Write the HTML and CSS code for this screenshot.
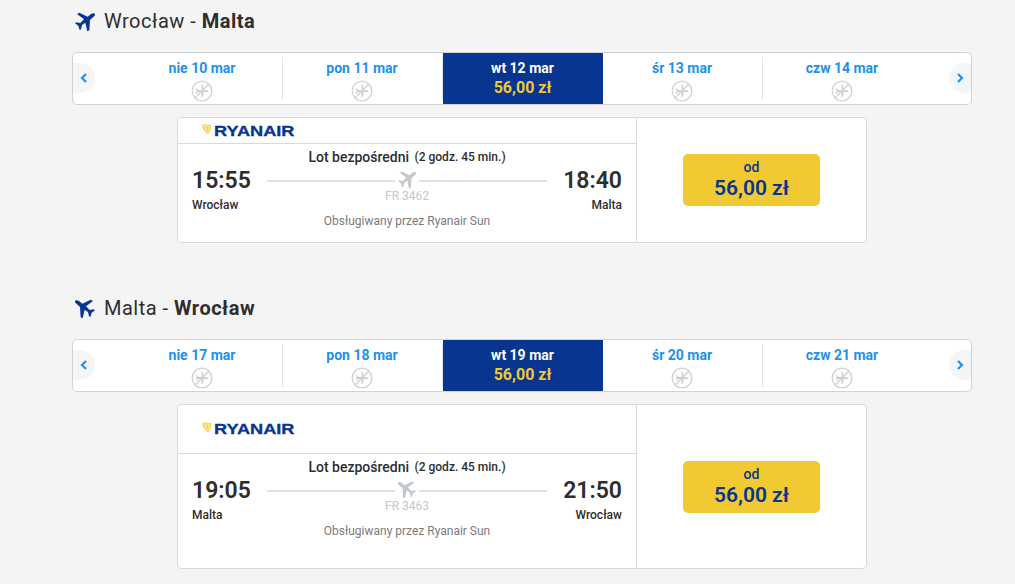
FILE: index.html
```html
<!DOCTYPE html>
<html lang="pl">
<head>
  <meta charset="UTF-8" />
  <meta name="viewport" content="width=device-width, initial-scale=1.0" />
  <title>Wrocław - Malta</title>
  <link rel="stylesheet" href="styles.css">
</head>
<body>
  <svg class="sprite">
    <symbol id="plane" viewBox="0 0 60 60">
      <path d="M60 6C59 2 52 3 47 7L38 14L13 2L6 6L27 22L16 33L4 31L0 34L10 41L14 54L18 52L21 39L31 32L37 58L43 55L45 24L54 16C59 12 61 9 60 6Z"/>
    </symbol>
    <symbol id="no-flight" viewBox="0 0 22 22">
      <circle cx="11" cy="11" r="9.8" fill="none" stroke="currentColor" stroke-width="1.3"/>
      <path d="M17.500 11C17.500 10.200 16.500 9.900 15 9.900H13L12 5H10.500L10.500 9.900H7.200L6 8.200H5L5.600 11L5 13.800H6L7.200 12.100H10.500L10 17H11.500L13 12.100H15C16.500 12.100 17.500 11.800 17.500 11Z"/>
      <path d="M4.300 17.700L17.700 4.300" stroke="currentColor" stroke-width="1.300"/>
    </symbol>
    <symbol id="ryanair" viewBox="0 0 94 14">
      <path d="M1.500 2.500Q4 .8 6 2.200Q8 3 9.800 2.200Q10.200 7 7 11L5 9Q2 7 1.500 2.500Z" fill="#fbe9a6" stroke="#f1c933" stroke-width=".8"/>
      <path d="M2.500 4L8 5M3.500 6.500L7.500 7.500M7 2.500L6 9" stroke="#f1c933" stroke-width=".6"/>
      <text x="13" y="12.500" textLength="80.500" lengthAdjust="spacingAndGlyphs" class="logo-text">RYANAIR</text>
    </symbol>
  </svg>

  <div class="trip">
    <h2><svg class="icon"><use href="#plane"/></svg><span>Wrocław - <b>Malta</b></span></h2>
    <div class="days">
      <button class="arrow"><svg viewBox="0 0 10 12"><path d="M7 2L3 6L7 10"/></svg></button>
      <div class="day">nie 10 mar<svg><use href="#no-flight"/></svg></div>
      <div class="day">pon 11 mar<svg><use href="#no-flight"/></svg></div>
      <div class="day active">wt 12 mar<span class="fare">56,00 zł</span></div>
      <div class="day">śr 13 mar<svg><use href="#no-flight"/></svg></div>
      <div class="day">czw 14 mar<svg><use href="#no-flight"/></svg></div>
      <button class="arrow next"><svg viewBox="0 0 10 12"><path d="M3 2L7 6L3 10"/></svg></button>
    </div>
    <div class="flight">
      <div class="info">
        <div class="carrier"><svg><use href="#ryanair"/></svg></div>
        <div class="route">
          <div class="stop"><div class="time">15:55</div><div class="city">Wrocław</div></div>
          <div class="path">
            <div class="direct">Lot bezpośredni <small>(2 godz. 45 min.)</small></div>
            <div class="line"><svg><use href="#plane"/></svg></div>
            <div class="number">FR 3462</div>
            <div class="operator">Obsługiwany przez Ryanair Sun</div>
          </div>
          <div class="stop end"><div class="time">18:40</div><div class="city">Malta</div></div>
        </div>
      </div>
      <div class="price">
        <button class="btn">od<strong>56,00 zł</strong></button>
      </div>
    </div>
  </div>

  <div class="trip return">
    <h2><svg class="icon"><use href="#plane"/></svg><span>Malta - <b>Wrocław</b></span></h2>
    <div class="days">
      <button class="arrow"><svg viewBox="0 0 10 12"><path d="M7 2L3 6L7 10"/></svg></button>
      <div class="day">nie 17 mar<svg><use href="#no-flight"/></svg></div>
      <div class="day">pon 18 mar<svg><use href="#no-flight"/></svg></div>
      <div class="day active">wt 19 mar<span class="fare">56,00 zł</span></div>
      <div class="day">śr 20 mar<svg><use href="#no-flight"/></svg></div>
      <div class="day">czw 21 mar<svg><use href="#no-flight"/></svg></div>
      <button class="arrow next"><svg viewBox="0 0 10 12"><path d="M3 2L7 6L3 10"/></svg></button>
    </div>
    <div class="flight">
      <div class="info">
        <div class="carrier"><svg><use href="#ryanair"/></svg></div>
        <div class="route">
          <div class="stop"><div class="time">19:05</div><div class="city">Malta</div></div>
          <div class="path">
            <div class="direct">Lot bezpośredni <small>(2 godz. 45 min.)</small></div>
            <div class="line"><svg><use href="#plane"/></svg></div>
            <div class="number">FR 3463</div>
            <div class="operator">Obsługiwany przez Ryanair Sun</div>
          </div>
          <div class="stop end"><div class="time">21:50</div><div class="city">Wrocław</div></div>
        </div>
      </div>
      <div class="price">
        <button class="btn">od<strong>56,00 zł</strong></button>
      </div>
    </div>
  </div>
</body>
</html>
```
FILE: styles.css
```css
* { box-sizing: border-box; margin: 0; padding: 0; }
html, body { height: 100%; overflow: hidden; }
body { font-family: Roboto, sans-serif; background: #f4f4f4; color: #2e2e2e; }
button { border: none; font-family: inherit; cursor: pointer; }
.sprite { display: none; }
.logo-text {
  font: bold 14px "Liberation Sans", Arial, sans-serif;
  fill: #073590; stroke: #073590; stroke-width: 0.3px;
}

.trip { width: 900px; height: 287px; margin-left: 72px; }
.trip h2 {
  display: flex; align-items: center; height: 52px; padding: 0 0 10px 3px;
  font-size: 20px; font-weight: 400; letter-spacing: 0.5px;
}
.trip h2 b { font-weight: 700; }
.trip h2 .icon { width: 20px; height: 20px; margin: 2px 9px 0 0; fill: #073590; }
.return .icon, .return .line svg { transform: scaleX(-1); }

.days {
  display: flex; align-items: center; height: 53px; overflow: hidden;
  background: #fff; border: 1px solid #d0d3d6; border-radius: 5px;
}
.arrow {
  display: flex; align-items: center; flex-shrink: 0;
  width: 22px; height: 30px; margin: 0 28px 2px 0;
  background: #f4f5f7; border-radius: 0 15px 15px 0;
}
.arrow svg {
  width: 10px; height: 12px; margin-left: 6px;
  fill: none; stroke: #2091eb; stroke-width: 2.2;
}
.arrow.next { margin: 0 0 2px 26px; border-radius: 15px 0 0 15px; }
.day {
  display: flex; flex-direction: column; align-items: center; flex-shrink: 0;
  width: 160px; height: 43px; padding: 1px 1px 0 0; border-right: 1px solid #e0e2e5;
  color: #2091eb; font-size: 14px; font-weight: 700; line-height: 20px;
}
.day svg { width: 22px; height: 22px; margin-top: 2px; flex-shrink: 0; color: #ced2d5; fill: #ced2d5; }
.day.active {
  height: 51px; padding-top: 5px; border: none;
  background: #073590; color: #fff;
}
.day:nth-child(6) { padding-right: 2px; border-right: none; }
.fare { color: #f1c933; font-size: 16px; line-height: 19px; }

.flight {
  display: flex; width: 690px; height: 126px; margin: 12px 0 0 105px;
  background: #fff; border: 1px solid #d5dae0; border-radius: 4px;
}
.info { width: 459px; border-right: 1px solid #d5dae0; }
.carrier {
  display: flex; align-items: center; height: 26px; padding: 0 0 2px 23px;
  border-bottom: 1px solid #d5dae0;
}
.carrier svg { width: 94px; height: 14px; }
.route { display: flex; justify-content: space-between; padding: 4px 14px 0; }
.stop { width: 75px; padding-top: 19px; }
.stop.end { text-align: right; }
.time { font-size: 23px; font-weight: 600; line-height: 28px; }
.city { margin-top: 2px; font-size: 12px; font-weight: 500; line-height: 16px; }
.path { width: 280px; text-align: center; }
.direct { font-size: 14px; font-weight: 500; line-height: 18px; }
.direct small { font-size: 12px; vertical-align: 1px; margin-left: 2px; }
.line { display: flex; align-items: center; gap: 3px; height: 18px; margin-top: 5px; }
.line::before, .line::after { content: ""; flex: 1; height: 2px; margin-top: 2px; background: #e0e2e5; }
.line svg { width: 18px; height: 18px; fill: #c3c8cd; }
.number { color: #c3c8cd; font-size: 12px; line-height: 14px; }
.operator { margin-top: 11px; color: #7b7b7b; font-size: 12px; line-height: 14px; }

.price { flex: 1; display: flex; align-items: center; justify-content: center; }
.btn {
  width: 137px; height: 52px; padding-bottom: 2px; background: #f1c933; color: #073590;
  border-radius: 5px; font-size: 14px; font-weight: 500; line-height: 18px;
}
.btn strong { display: block; font-size: 21px; font-weight: 600; line-height: 24px; }

.return .flight { height: 165px; }
.return .carrier { height: 49px; }
```
